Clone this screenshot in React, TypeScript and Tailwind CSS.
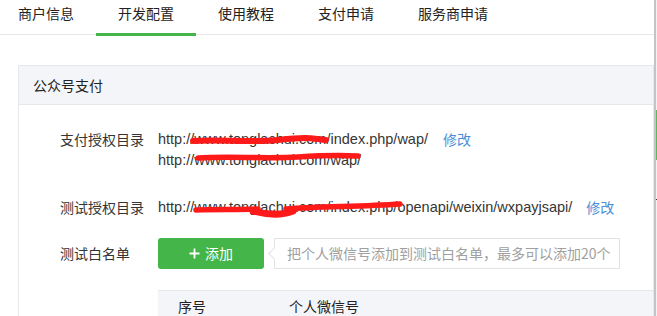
import React from "react";

const cjk = '"Noto Sans CJK SC", "Liberation Sans", sans-serif';
const latin = '"Liberation Sans", "Noto Sans CJK SC", sans-serif';

function Tab({ label, active }: { label: string; active?: boolean }) {
  return (
    <div className="relative h-full px-[22px] pt-[3px] text-[14px] leading-[20px] text-[#222]">
      {label}
      {active && <div className="absolute left-0 right-0 bottom-[-2px] h-[3px] bg-[#44b549]" />}
    </div>
  );
}

export default function App() {
  return (
    <div className="flex w-[657px] h-[316px] overflow-hidden bg-white" style={{ fontFamily: cjk }}>
      <div className="w-[654px] shrink-0 h-full">
        {/* tabs */}
        <div className="h-[35px] border-b border-[#e7e7eb] flex -ml-[4px]">
          <Tab label="商户信息" />
          <Tab label="开发配置" active />
          <Tab label="使用教程" />
          <Tab label="支付申请" />
          <Tab label="服务商申请" />
        </div>
        {/* panel */}
        <div className="mt-[30px] ml-[18px] border border-[#e7e7eb] border-b-0">
          <div className="h-[39px] bg-[#f4f5f9] border-b border-[#e7e7eb] pl-[14px] flex items-center text-[14px] text-[#222]">
            公众号支付
          </div>
          <div className="pl-[41px] pt-[24px] text-[14px] text-[#353535]">
            {/* row 1 */}
            <div className="flex leading-[21px]">
              <div className="w-[98px] shrink-0">支付授权目录</div>
              <div className="relative" style={{ fontFamily: latin, fontSize: "14.5px" }}>
                <div className="flex">
                  <span>http://www.tonglachui.com/index.php/wap/</span>
                  <span className="ml-[15px] text-[#4a8fd6] text-[14px]" style={{ fontFamily: cjk }}>修改</span>
                </div>
                <div>http://www.tonglachui.com/wap/</div>
                <svg className="absolute left-0 top-0 pointer-events-none" width="240" height="40" viewBox="0 0 240 40">
                  <path d="M35 12 C60 10, 90 14, 120 11 S150 9, 168 11" stroke="#ff1a1a" strokeWidth="6" fill="none" strokeLinecap="round" />
                  <path d="M40 29 C70 27, 110 30, 140 28 S180 26, 200 27" stroke="#ff1a1a" strokeWidth="5.5" fill="none" strokeLinecap="round" />
                </svg>
              </div>
            </div>
            {/* row 2 */}
            <div className="flex leading-[21px] mt-[26px]">
              <div className="w-[98px] shrink-0">测试授权目录</div>
              <div className="relative flex" style={{ fontFamily: latin, fontSize: "14.5px" }}>
                <span>http://www.tonglachui.com/index.php/openapi/weixin/wxpayjsapi/</span>
                <span className="ml-[14px] text-[#4a8fd6] text-[14px]" style={{ fontFamily: cjk }}>修改</span>
                <svg className="absolute left-0 top-0 pointer-events-none" width="260" height="24" viewBox="0 0 260 24">
                  <path d="M38 13 C60 12, 80 13, 100 12" stroke="#ff1a1a" strokeWidth="5.5" fill="none" strokeLinecap="round" />
                  <path d="M95 14 C110 18, 125 18, 135 14" stroke="#ff1a1a" strokeWidth="7" fill="none" strokeLinecap="round" />
                  <path d="M128 12 C160 9, 200 10, 242 7" stroke="#ff1a1a" strokeWidth="5.5" fill="none" strokeLinecap="round" />
                </svg>
              </div>
            </div>
            {/* row 3 */}
            <div className="flex items-center mt-[20px]">
              <div className="w-[98px] shrink-0">测试白名单</div>
              <button className="w-[106px] h-[31px] rounded-[3px] bg-[#44b549] text-white text-[14px] flex items-center justify-center gap-[5px]">
                <svg width="11" height="11" viewBox="0 0 11 11">
                  <path d="M5.5 0.5V10.5M0.5 5.5H10.5" stroke="white" strokeWidth="1.8" />
                </svg>
                <span>添加</span>
              </button>
              <div className="relative ml-[10px] w-[346px] h-[31px] border border-[#e2e2e2] bg-white flex items-center pl-[12px] text-[14px] text-[#a0a0a0]">
                <div className="absolute left-[-5px] top-[10px] w-[9px] h-[9px] rotate-45 bg-white border-l border-b border-[#e2e2e2]" />
                <span className="relative">把个人微信号添加到测试白名单，最多可以添加20个</span>
              </div>
            </div>
            {/* table header */}
            <div className="mt-[21px] ml-[98px] h-[32px] bg-[#f4f5f9] border-t border-[#e7e7eb] flex items-center text-[14px] text-[#222]">
              <div className="w-[131px] pl-[20px]">序号</div>
              <div>个人微信号</div>
            </div>
          </div>
        </div>
      </div>
      {/* right window edge */}
      <div className="relative flex-1 h-full border-l-2 border-[#c4c4c4] bg-[#f2f2f2]">
        <div className="absolute left-0 top-[110px] w-full h-[50px] bg-[#5cb85c]" />
        <div className="absolute left-0 top-[199px] w-full h-[1px] bg-[#333]" />
      </div>
    </div>
  );
}
